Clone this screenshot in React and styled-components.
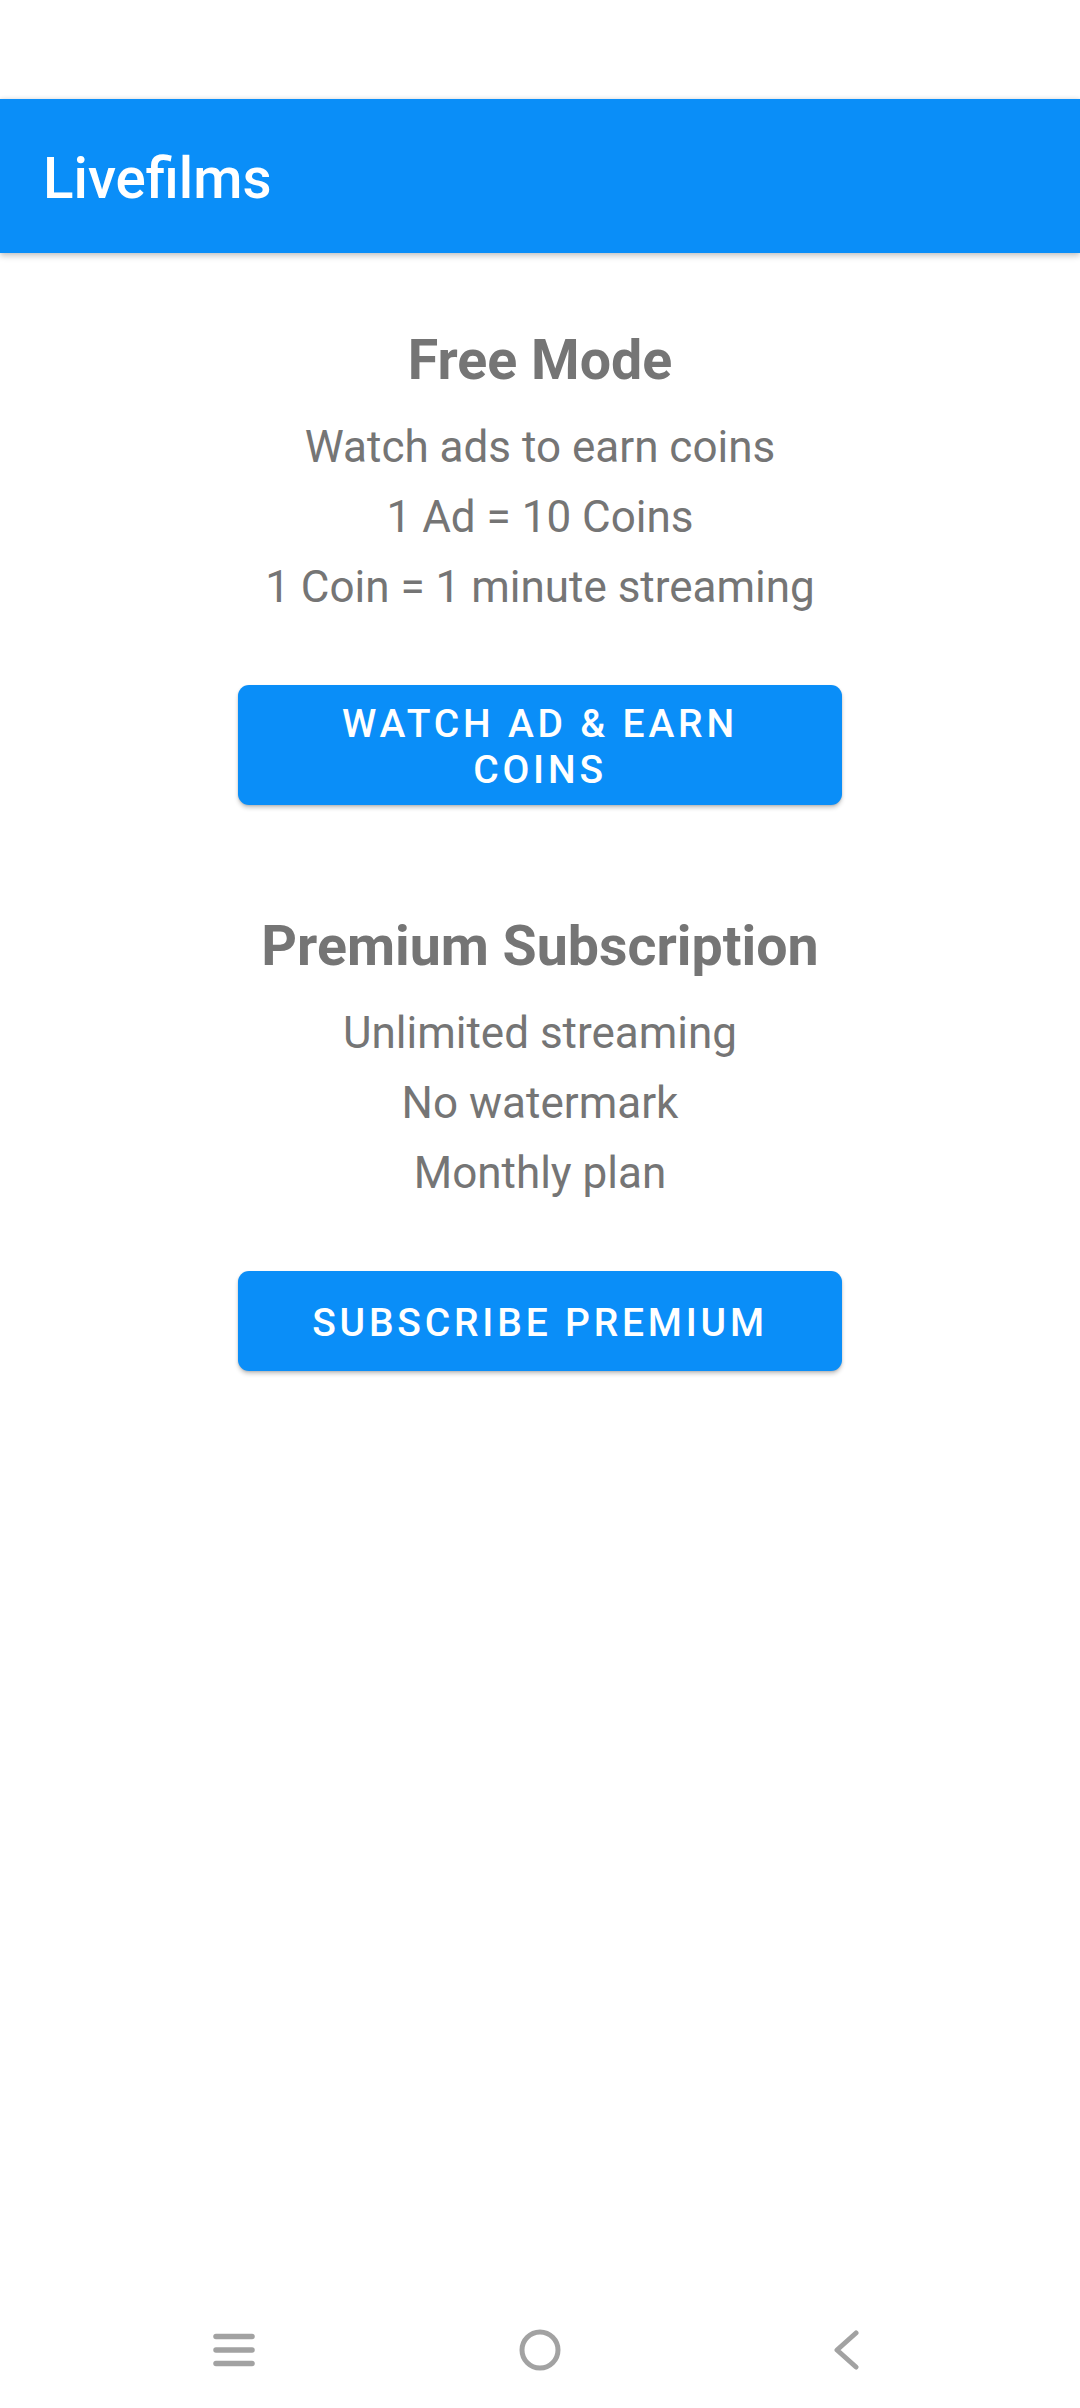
import React from "react";
import styled, { createGlobalStyle } from "styled-components";

const GlobalStyle = createGlobalStyle`
  html, body {
    margin: 0;
    padding: 0;
    background: #ffffff;
  }
  body {
    font-family: Roboto, "Noto Sans", "Liberation Sans", sans-serif;
  }
`;

const plans = [
  {
    title: "Free Mode",
    lines: ["Watch ads to earn coins", "1 Ad = 10 Coins", "1 Coin = 1 minute streaming"],
    action: "Watch Ad & Earn Coins",
  },
  {
    title: "Premium Subscription",
    lines: ["Unlimited streaming", "No watermark", "Monthly plan"],
    action: "Subscribe Premium",
  },
];

const App = () => {
  return (
    <Screen>
      <GlobalStyle />
      <StatusBar />
      <AppBar>
        <AppTitle>Livefilms</AppTitle>
      </AppBar>
      <Content>
        {plans.map((plan) => (
          <Plan key={plan.title}>
            <PlanTitle>{plan.title}</PlanTitle>
            <PlanLines>
              {plan.lines.map((line) => (
                <PlanLine key={line}>{line}</PlanLine>
              ))}
            </PlanLines>
            <ActionButton>{plan.action}</ActionButton>
          </Plan>
        ))}
      </Content>
      <NavBar>
        <NavCell>
          <svg width="42" height="34" viewBox="0 0 42 34">
            <g stroke="#a2a2a2" strokeWidth="5.5" strokeLinecap="round">
              <line x1="3" y1="3.5" x2="39" y2="3.5" />
              <line x1="3" y1="17" x2="39" y2="17" />
              <line x1="3" y1="30.5" x2="39" y2="30.5" />
            </g>
          </svg>
        </NavCell>
        <NavCell>
          <svg width="42" height="42" viewBox="0 0 42 42">
            <circle cx="21" cy="21" r="18" fill="none" stroke="#a2a2a2" strokeWidth="5" />
          </svg>
        </NavCell>
        <NavCell>
          <svg width="28" height="40" viewBox="0 0 28 40">
            <polyline
              points="24,3 5,20 24,37"
              fill="none"
              stroke="#a2a2a2"
              strokeWidth="5"
              strokeLinecap="round"
              strokeLinejoin="round"
            />
          </svg>
        </NavCell>
      </NavBar>
    </Screen>
  );
};

const Screen = styled.div`
  width: 1080px;
  min-height: 2408px;
  display: flex;
  flex-direction: column;
  background: #ffffff;
`;

const StatusBar = styled.div`
  height: 99px;
  background: #ffffff;
`;

const AppBar = styled.header`
  height: 154px;
  box-sizing: border-box;
  padding: 6px 0 0 43px;
  display: flex;
  align-items: center;
  background: #0a8ef8;
  box-shadow: 0 3px 6px rgba(0, 0, 0, 0.22), 0 -1px 4px rgba(0, 0, 0, 0.08);
  position: relative;
  z-index: 1;
`;

const AppTitle = styled.h1`
  margin: 0;
  font-size: 56.5px;
  font-weight: 500;
  color: #ffffff;
  line-height: 64px;
`;

const Content = styled.main`
  flex: 1;
  display: flex;
  flex-direction: column;
  align-items: center;
  padding-top: 75px;
  gap: 109px;
`;

const Plan = styled.section`
  display: flex;
  flex-direction: column;
  align-items: center;
`;

const PlanTitle = styled.h2`
  margin: 0;
  font-size: 55.5px;
  font-weight: 700;
  line-height: 65px;
  color: #757575;
`;

const PlanLines = styled.div`
  margin-top: 19px;
  display: flex;
  flex-direction: column;
  align-items: center;
`;

const PlanLine = styled.p`
  margin: 0;
  font-size: 44px;
  line-height: 70px;
  color: #757575;
`;

const ActionButton = styled.button`
  margin-top: 63px;
  width: 604px;
  min-height: 100px;
  box-sizing: border-box;
  padding: 16px 44px 12px;
  display: flex;
  align-items: center;
  justify-content: center;
  border: none;
  border-radius: 11px;
  background: #0a8ef8;
  color: #ffffff;
  font-family: Roboto, "Noto Sans", sans-serif;
  font-size: 39px;
  font-weight: 500;
  line-height: 46px;
  letter-spacing: 3.8px;
  text-transform: uppercase;
  text-align: center;
  box-shadow: 0 3px 4px rgba(0, 0, 0, 0.2), 0 1px 2px rgba(0, 0, 0, 0.12);
`;

const NavBar = styled.nav`
  height: 116px;
  padding: 0 81px;
  display: grid;
  grid-template-columns: repeat(3, 306px);
  align-items: center;
  background: #ffffff;
`;

const NavCell = styled.div`
  display: flex;
  justify-content: center;
  align-items: center;
`;

export default App;
